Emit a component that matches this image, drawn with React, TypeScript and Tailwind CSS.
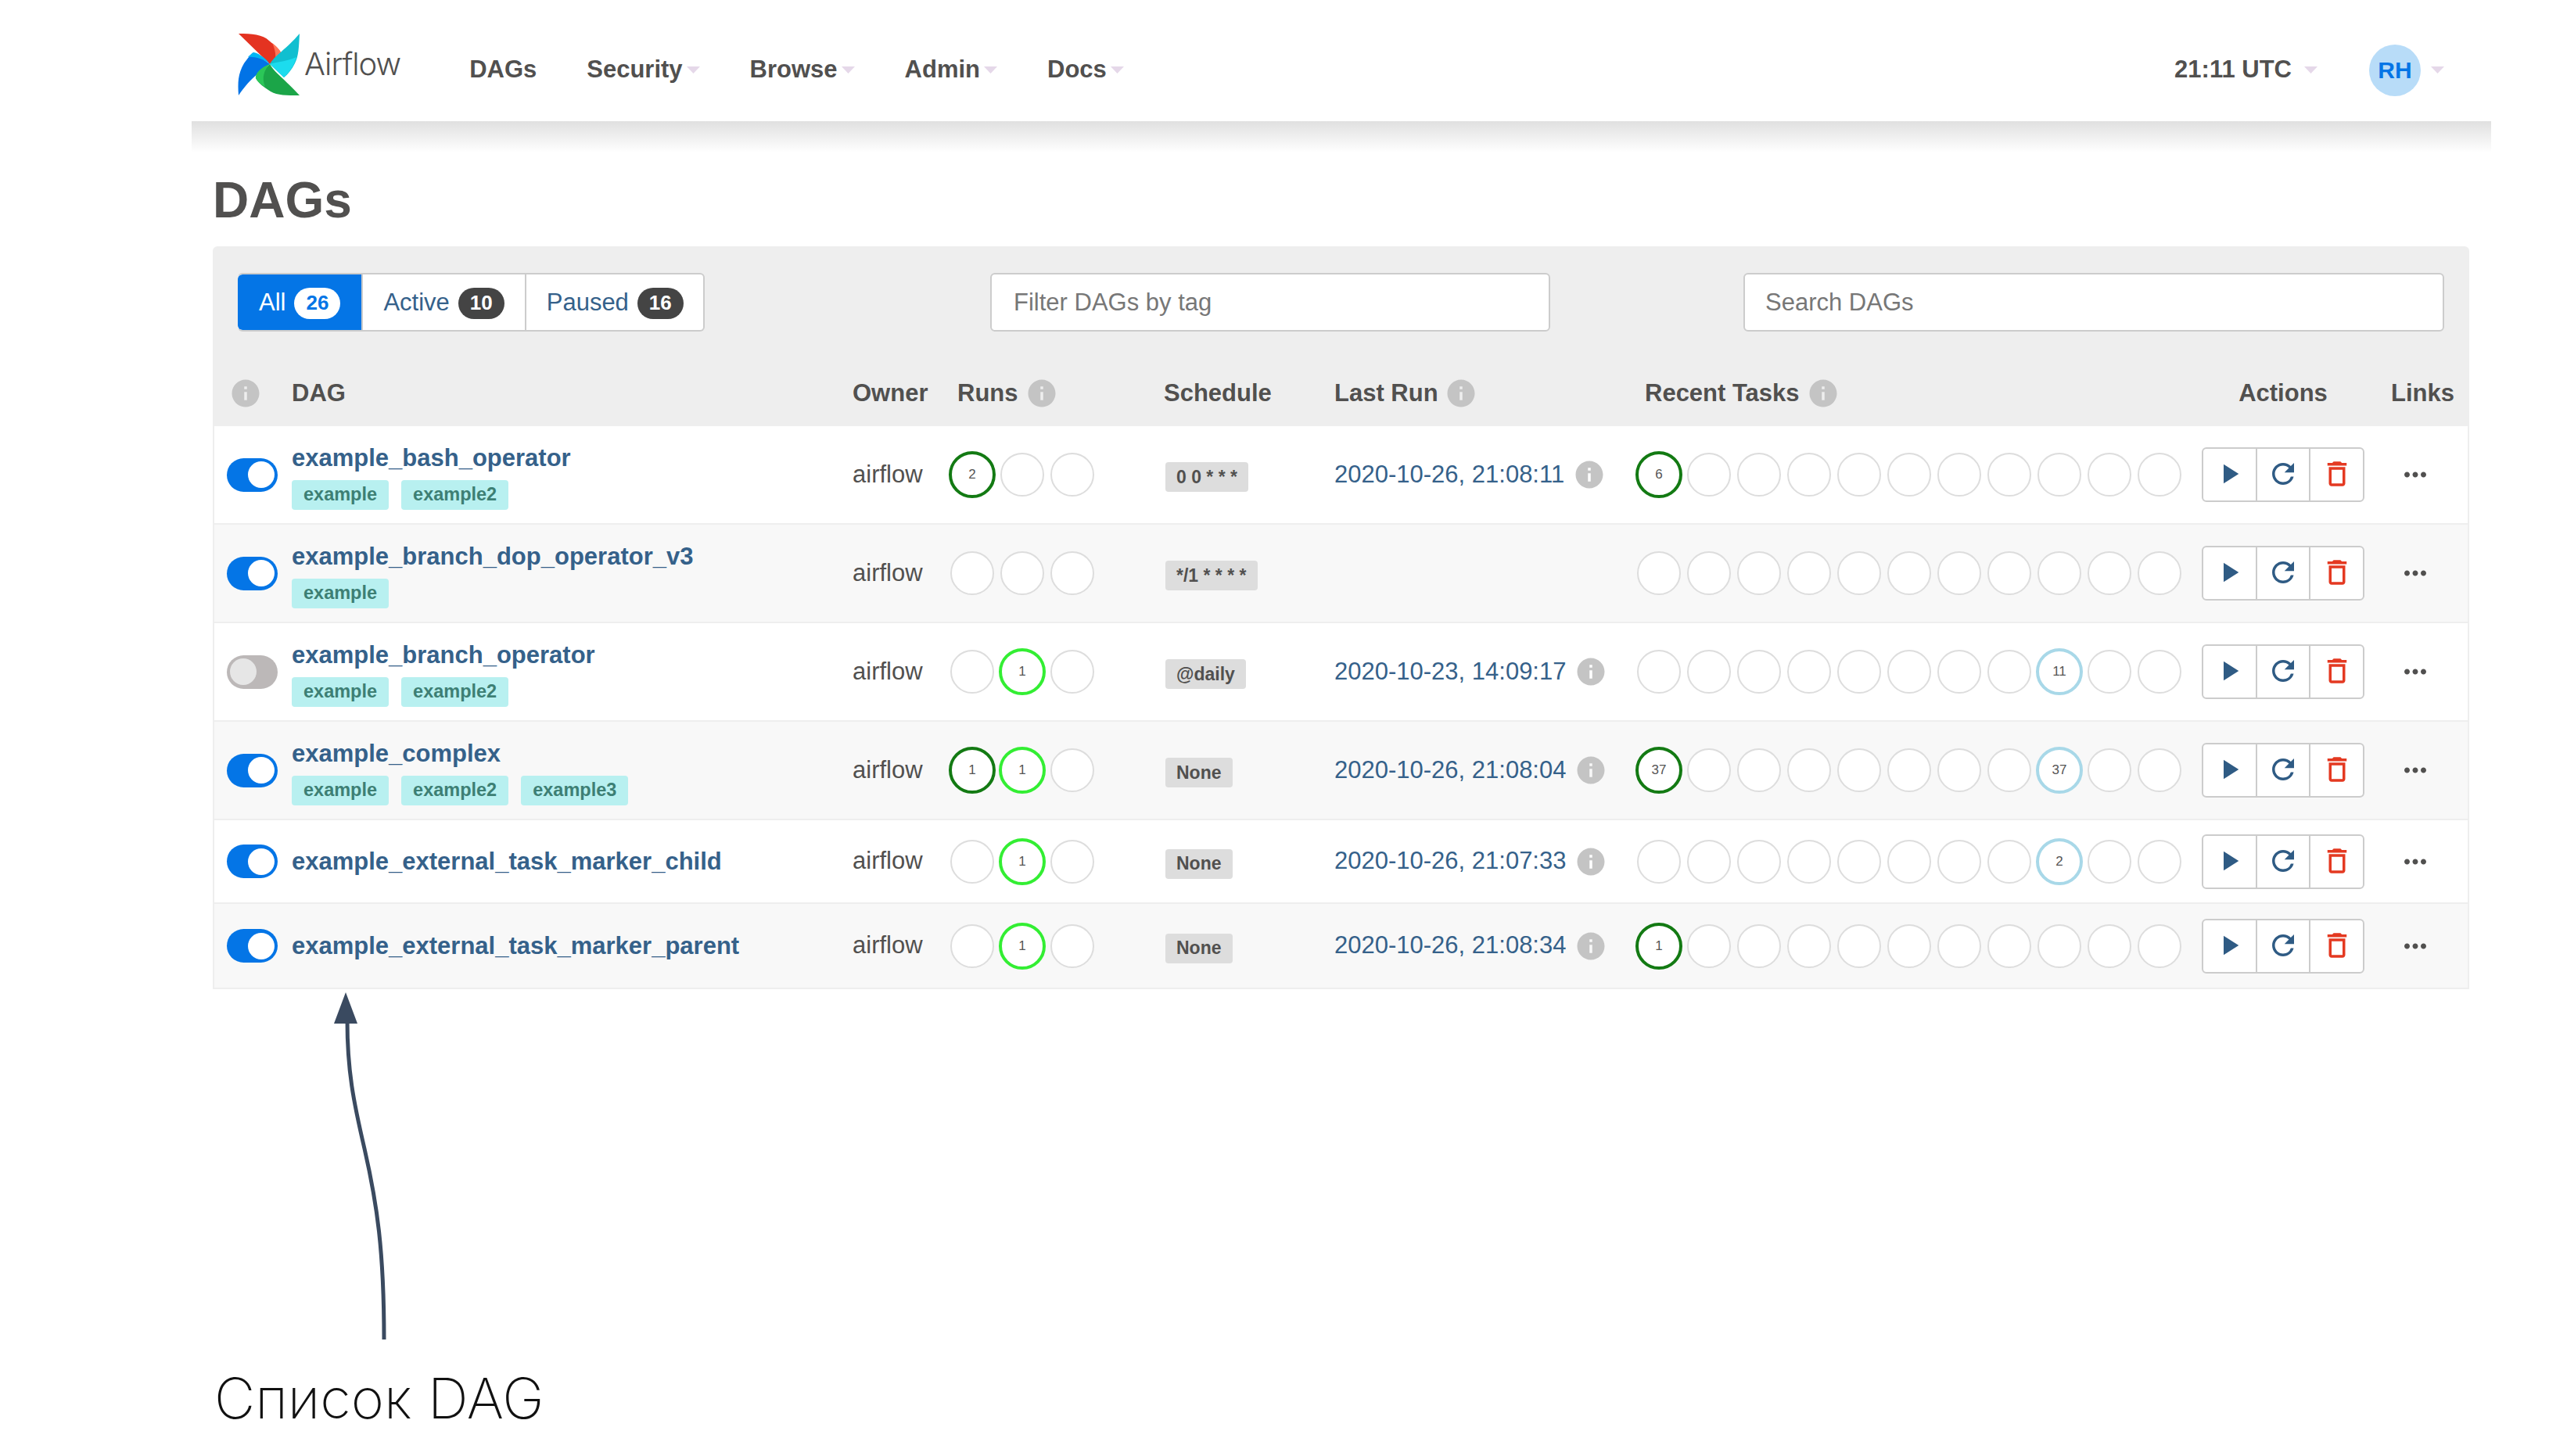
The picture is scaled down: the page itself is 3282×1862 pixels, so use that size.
import { MdInfo, MdPlayArrow, MdRefresh, MdDeleteOutline, MdMoreHoriz } from "react-icons/md";

type Dot = { n: number; kind: "success" | "running" | "queued" };

type DagRow = {
  name: string;
  tags: string[];
  active: boolean;
  schedule: string;
  lastRun?: string;
  runs: Record<number, Dot>;
  tasks: Record<number, Dot>;
  height: string;
};

const rows: DagRow[] = [
  {
    name: "example_bash_operator",
    tags: ["example", "example2"],
    active: true,
    schedule: "0 0 * * *",
    lastRun: "2020-10-26, 21:08:11",
    runs: { 0: { n: 2, kind: "success" } },
    tasks: { 0: { n: 6, kind: "success" } },
    height: "h-[126px]",
  },
  {
    name: "example_branch_dop_operator_v3",
    tags: ["example"],
    active: true,
    schedule: "*/1 * * * *",
    runs: {},
    tasks: {},
    height: "h-[126px]",
  },
  {
    name: "example_branch_operator",
    tags: ["example", "example2"],
    active: false,
    schedule: "@daily",
    lastRun: "2020-10-23, 14:09:17",
    runs: { 1: { n: 1, kind: "running" } },
    tasks: { 8: { n: 11, kind: "queued" } },
    height: "h-[126px]",
  },
  {
    name: "example_complex",
    tags: ["example", "example2", "example3"],
    active: true,
    schedule: "None",
    lastRun: "2020-10-26, 21:08:04",
    runs: { 0: { n: 1, kind: "success" }, 1: { n: 1, kind: "running" } },
    tasks: { 0: { n: 37, kind: "success" }, 8: { n: 37, kind: "queued" } },
    height: "h-[126px]",
  },
  {
    name: "example_external_task_marker_child",
    tags: [],
    active: true,
    schedule: "None",
    lastRun: "2020-10-26, 21:07:33",
    runs: { 1: { n: 1, kind: "running" } },
    tasks: { 8: { n: 2, kind: "queued" } },
    height: "h-[107px]",
  },
  {
    name: "example_external_task_marker_parent",
    tags: [],
    active: true,
    schedule: "None",
    lastRun: "2020-10-26, 21:08:34",
    runs: { 1: { n: 1, kind: "running" } },
    tasks: { 0: { n: 1, kind: "success" } },
    height: "h-[109px]",
  },
];

const headCols = "grid grid-cols-[101px_717px_119px_279px_218px_383px_726px_225px_117px]";
const rowCols = "grid grid-cols-[99px_717px_121px_279px_216px_383px_726px_225px_115px]";

function Caret() {
  return (
    <svg width="17" height="9" viewBox="0 0 17 9" className="shrink-0">
      <path d="M0 0h17l-8.5 9z" fill="#e5d8e9" />
    </svg>
  );
}

function Info() {
  return <MdInfo size={42} className="shrink-0 text-[#c4c4c4]" />;
}

function Logo() {
  return (
    <svg width="80" height="80" viewBox="0 0 80 80" className="-mt-[14px] shrink-0">
      <path d="M1 0C18 0 32 1 40 9C47 15 54 20 56 27L41 39Z" fill="#e43321" />
      <path d="M44 12C50 17 55 21 56 27L48 33C49 26 47 18 44 12Z" fill="#ff7557" />
      <path d="M79 0C78 18 78 28 73 38C69 46 64 52 59 56L41 39C47 28 62 20 79 0Z" fill="#11bfd0" />
      <path d="M41 39C48 36 62 36 75 30C72 42 65 50 59 56Z" fill="#1cdcee" />
      <path d="M1 79C0 62 0 52 8 38C13 31 17 26 20 24L41 39C32 47 18 54 1 79Z" fill="#0273e6" />
      <path d="M20 24C24 24 35 30 41 39C33 32 20 29 13 30C15 28 18 25 20 24Z" fill="#00b6f4" />
      <path d="M79 79C62 79 51 79 42 74C34 69 26 63 23 57L41 39C47 50 60 58 79 79Z" fill="#1ba548" />
      <path d="M23 57C22 50 32 42 41 39C34 46 30 56 35 68C29 65 25 61 23 57Z" fill="#2bc758" />
    </svg>
  );
}

function Circle({ dot }: { dot?: Dot }) {
  const base = "flex items-center justify-center rounded-full bg-white text-[17px] text-[#555555]";
  let cls = "h-[56px] w-[56px] border-2 border-[#dddddd]";
  if (dot?.kind === "success") cls = "h-[60px] w-[60px] border-[4px] border-[#137a13]";
  if (dot?.kind === "running") cls = "h-[60px] w-[60px] border-[4px] border-[#33ee33]";
  if (dot?.kind === "queued") cls = "h-[60px] w-[60px] border-[4px] border-[#a8d8e8]";
  return (
    <div className="flex h-[60px] w-[64px] shrink-0 items-center justify-center">
      <div className={`${base} ${cls}`}>{dot?.n}</div>
    </div>
  );
}

function Toggle({ on }: { on: boolean }) {
  if (!on) {
    return (
      <div className="ml-[16px] flex h-[43px] w-[65px] items-center rounded-full bg-[#bcb8b8] pl-[4px]">
        <div className="h-[34px] w-[34px] rounded-full bg-[#e6e6e6]" />
      </div>
    );
  }
  return (
    <div className="ml-[16px] flex h-[43px] w-[65px] items-center justify-end rounded-full bg-[#0475e6] pr-[4px]">
      <div className="h-[34px] w-[34px] rounded-full bg-white" />
    </div>
  );
}

function NavLink({ label, caret }: { label: string; caret?: boolean }) {
  return (
    <div className="flex items-center gap-[5px]">
      <span className="text-[31px] font-bold text-[#51504f]">{label}</span>
      {caret && <Caret />}
    </div>
  );
}

function Tab({ label, count, active }: { label: string; count: number; active?: boolean }) {
  return (
    <div
      className={
        active
          ? "flex h-full items-center gap-[11px] rounded-l-[6px] bg-[#0475e6] px-[27px] pt-[2px] text-white"
          : "flex h-full items-center gap-[11px] border-l-2 border-[#cccccc] px-[26px] pt-[2px] text-[#35618a]"
      }
    >
      <span className="text-[31px]">{label}</span>
      <span
        className={
          active
            ? "flex h-[40px] items-center rounded-full bg-white px-[15px] text-[26px] font-bold text-[#0475e6]"
            : "flex h-[40px] items-center rounded-full bg-[#444444] px-[15px] text-[26px] font-bold text-white"
        }
      >
        {count}
      </span>
    </div>
  );
}

function Row({ row, even }: { row: DagRow; even: boolean }) {
  return (
    <div className={`${rowCols} ${row.height} items-center border-b-2 border-[#eeeeee] ${even ? "bg-[#f8f8f8]" : "bg-white"}`}>
      <Toggle on={row.active} />
      <div className={row.tags.length > 0 ? "mt-[3px]" : ""}>
        <div className="text-[31px] leading-[40px] font-bold text-[#35618a]">{row.name}</div>
        {row.tags.length > 0 && (
          <div className="mt-[8px] flex gap-[16px]">
            {row.tags.map((tag) => (
              <span key={tag} className="flex h-[38px] items-center rounded-[4px] bg-[#b8f0f0] px-[15px] text-[23.5px] font-bold text-[#3d7f74]">
                {tag}
              </span>
            ))}
          </div>
        )}
      </div>
      <div className="text-[31px] text-[#51504f]">airflow</div>
      <div className="flex">
        {[0, 1, 2].map((i) => (
          <Circle key={i} dot={row.runs[i]} />
        ))}
      </div>
      <div>
        <span className="mt-[6px] inline-flex h-[38px] items-center rounded-[4px] bg-[#dddddd] px-[14px] text-[23px] font-bold text-[#51504f]">
          {row.schedule}
        </span>
      </div>
      <div className="flex items-center gap-[11px] text-[31px] text-[#35618a]">
        {row.lastRun && (
          <>
            <span>{row.lastRun}</span>
            <Info />
          </>
        )}
      </div>
      <div className="flex">
        {Array.from({ length: 11 }, (_, i) => (
          <Circle key={i} dot={row.tasks[i]} />
        ))}
      </div>
      <div className="flex h-[70px] w-[208px] overflow-hidden rounded-[6px] border-2 border-[#cccccc] bg-white">
        <div className="flex flex-1 items-center justify-center pb-[2px] text-[#2f5b84]">
          <MdPlayArrow size={42} />
        </div>
        <div className="flex flex-1 items-center justify-center border-x-2 border-[#cccccc] pb-[2px] text-[#2f5b84]">
          <MdRefresh size={42} />
        </div>
        <div className="flex flex-1 items-center justify-center pb-[2px] text-[#e43921]">
          <MdDeleteOutline size={42} />
        </div>
      </div>
      <div className="pl-[27px] text-[#51504f]">
        <MdMoreHoriz size={42} />
      </div>
    </div>
  );
}

export default function App() {
  return (
    <div className="h-[1862px] w-[3282px] overflow-hidden bg-white font-['Liberation_Sans',Arial,sans-serif]">
      {/* Navbar */}
      <nav className="ml-[245px] flex h-[155px] w-[2940px] items-center pt-[24px] pr-[60px] pl-[59px]">
        <Logo />
        <span className="-mt-[16px] ml-[5px] font-['Inter',sans-serif] text-[40px] font-light tracking-[-1px] text-[#51504f]">Airflow</span>
        <div className="ml-[88px] flex items-center gap-[64px]">
          <NavLink label="DAGs" />
          <NavLink label="Security" caret />
          <NavLink label="Browse" caret />
          <NavLink label="Admin" caret />
          <NavLink label="Docs" caret />
        </div>
        <div className="ml-auto flex items-center">
          <div className="flex items-center gap-[16px]">
            <span className="text-[31px] font-bold text-[#51504f]">21:11 UTC</span>
            <Caret />
          </div>
          <div className="ml-[66px] flex h-[66px] w-[66px] items-center justify-center rounded-full bg-[#b8dcf8] text-[30px] font-bold text-[#0475e6]">
            RH
          </div>
          <div className="ml-[13px]">
            <Caret />
          </div>
        </div>
      </nav>
      <div className="ml-[245px] h-[40px] w-[2940px] bg-gradient-to-b from-[#e0e0e0] to-white" />

      <main className="ml-[272px] w-[2885px]">
        <h1 className="mt-[25px] h-[95px] text-[64px] leading-[72px] font-bold text-[#51504f]">DAGs</h1>

        <section className="rounded-t-[6px] bg-[#eeeeee]">
          <div className="flex pt-[34px] pl-[32px]">
            <div className="flex h-[75px] w-[597px] shrink-0 overflow-hidden rounded-[6px] border-2 border-l-0 border-[#cccccc] bg-white">
              <Tab label="All" count={26} active />
              <Tab label="Active" count={10} />
              <Tab label="Paused" count={16} />
            </div>
            <input
              placeholder="Filter DAGs by tag"
              className="ml-[365px] h-[75px] w-[716px] rounded-[6px] border-2 border-[#cccccc] bg-white pl-[28px] text-[31px] outline-none placeholder:text-[#777777]"
            />
            <input
              placeholder="Search DAGs"
              className="ml-[247px] h-[75px] w-[896px] rounded-[6px] border-2 border-[#cccccc] bg-white pl-[26px] text-[31px] outline-none placeholder:text-[#777777]"
            />
          </div>

          {/* Table header */}
          <div className={`${headCols} h-[121px] items-center pt-[37px] text-[31px] font-bold text-[#51504f]`}>
            <div className="pl-[21px]">
              <Info />
            </div>
            <div>DAG</div>
            <div>Owner</div>
            <div className="flex items-center gap-[9px] pl-[15px]">
              Runs <Info />
            </div>
            <div>Schedule</div>
            <div className="flex items-center gap-[8px]">
              Last Run <Info />
            </div>
            <div className="flex items-center gap-[9px] pl-[14px]">
              Recent Tasks <Info />
            </div>
            <div className="w-[208px] text-center">Actions</div>
            <div className="pl-[17px]">Links</div>
          </div>

          <div className="border-x-2 border-[#eeeeee]">
            {rows.map((row, i) => (
              <Row key={row.name} row={row} even={i % 2 === 1} />
            ))}
          </div>
        </section>
      </main>

      {/* Annotation */}
      <svg width="80" height="446" viewBox="0 0 80 446" className="mt-[4px] ml-[420px] block">
        <path d="M71 444C71 330 62 270 46 200C32 140 24 100 24 36" fill="none" stroke="#3a4a60" strokeWidth="5" />
        <path d="M22 0L37 40H7Z" fill="#3a4a60" />
      </svg>
      <div className="mt-[28px] ml-[274px] font-['Inter',sans-serif] text-[72px] leading-[90px] font-extralight text-[#111111]">
        Список DAG
      </div>
    </div>
  );
}
